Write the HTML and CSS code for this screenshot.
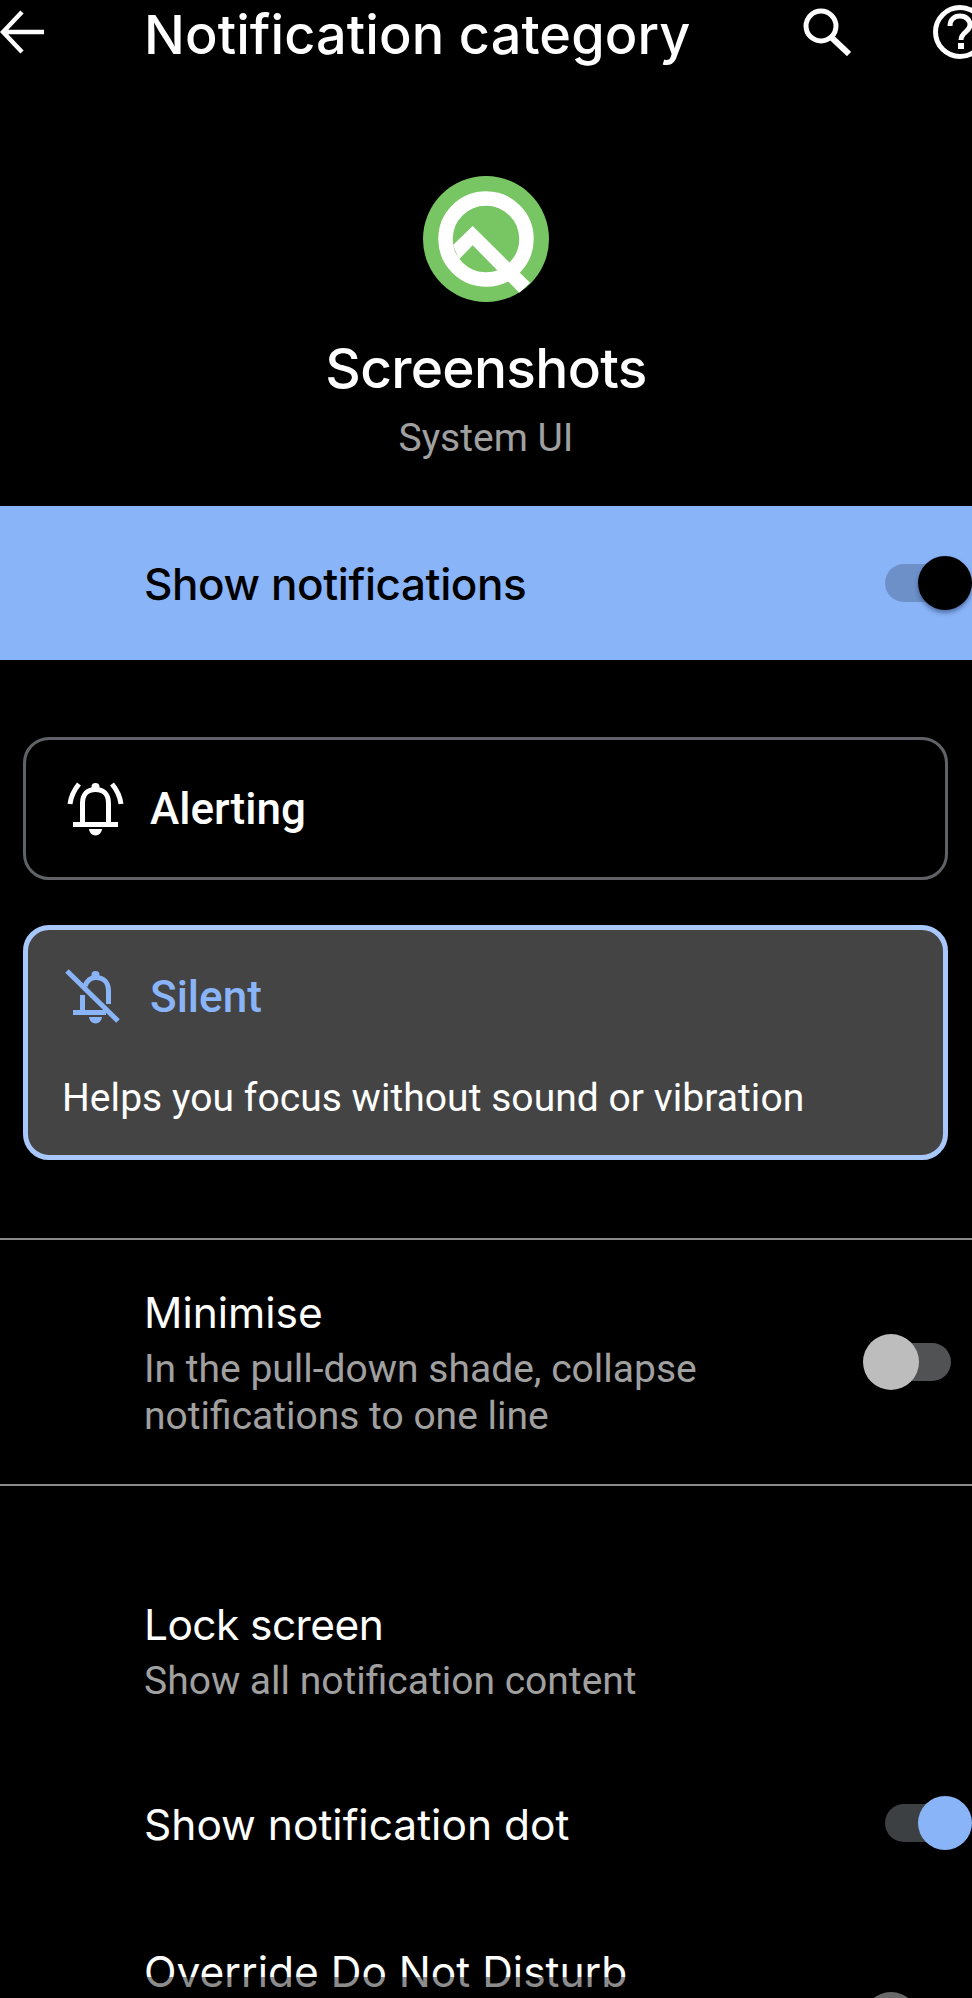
FILE: index.html
```html
<!DOCTYPE html>
<html>
<head>
    <title>Notification category</title>
    <meta charset="UTF-8">
    <link rel="stylesheet" href="styles.css">
</head>
<body>
<div class="screen">
    <header class="app-bar">
        <svg class="back-icon" viewBox="0 0 46 44"><path d="M44 22H4M22 2 3 22l19 20" fill="none" stroke="#fff" stroke-width="4.5"/></svg>
        <h1 class="app-title">Notification category</h1>
        <svg class="search-icon" viewBox="0 0 48 48"><circle cx="18" cy="18" r="15" fill="none" stroke="#fff" stroke-width="5"/><path d="M28 29l18 17" fill="none" stroke="#fff" stroke-width="6"/></svg>
        <svg class="help-icon" viewBox="0 0 54 54"><circle cx="27" cy="27" r="24.5" fill="none" stroke="#fff" stroke-width="5"/><path d="M17 21c0-6 4-10 10-10s10 4 10 9c0 7-9 7-9 15" fill="none" stroke="#fff" stroke-width="5"/><rect x="25" y="38" width="6" height="6" fill="#fff"/></svg>
    </header>

    <section class="hero">
        <svg class="app-logo" viewBox="0 0 126 126">
            <circle cx="63" cy="63" r="63" fill="#78c563"/>
            <circle cx="63" cy="63" r="40.5" fill="none" stroke="#fff" stroke-width="14.5"/>
            <path d="M49.7 50 30 69l6 14.3 13.7-14L96.3 116.7 107 106.7z" fill="#fff"/>
        </svg>
        <div class="hero-title">Screenshots</div>
        <div class="hero-sub">System UI</div>
    </section>

    <div class="master-row">
        <span class="master-label">Show notifications</span>
        <div class="toggle toggle-master"><span class="thumb"></span></div>
    </div>

    <section class="choices">
        <div class="choice">
            <div class="choice-head">
                <svg class="choice-icon" viewBox="0 0 63 63" fill="none" stroke="#fff">
                    <path d="M18.5 46V26c0-9 5.500-13.500 13-13.500S44.500 17 44.500 26v20" stroke-width="5"/>
                    <circle cx="31.500" cy="10" r="4" fill="#fff" stroke="none"/>
                    <path d="M9 47.500h45" stroke-width="5"/>
                    <path d="M25 52h13a6.500 6.500 0 0 1-13 0z" fill="#fff" stroke="none"/>
                    <path d="M6 27C7 19 10 13 15 7M57 27C56 19 53 13 48 7" stroke-width="5"/>
                </svg>
                <span class="choice-name">Alerting</span>
            </div>
        </div>
        <div class="choice choice-on">
            <div class="choice-head">
                <svg class="choice-icon" viewBox="0 0 63 63" fill="none" stroke="#8ab4f8">
                    <path d="M21 21c2-5 6-8.500 10.500-8.500 7.500 0 13 4.500 13 13.500v13" stroke-width="5"/>
                    <path d="M18.500 46V30" stroke-width="5"/>
                    <circle cx="31.500" cy="10" r="4" fill="#8ab4f8" stroke="none"/>
                    <path d="M9 47.500h33" stroke-width="5"/>
                    <path d="M25 52h13a6.500 6.500 0 0 1-13 0z" fill="#8ab4f8" stroke="none"/>
                    <path d="M3 6l51 50" stroke-width="5"/>
                </svg>
                <span class="choice-name">Silent</span>
            </div>
            <p class="choice-text">Helps you focus without sound or vibration</p>
        </div>
    </section>

    <div class="row row-divided">
        <div class="row-text">
            <div class="row-title">Minimise</div>
            <div class="row-sub">In the pull-down shade, collapse<br>notifications to one line</div>
        </div>
        <div class="toggle toggle-off"><span class="thumb"></span></div>
    </div>

    <div class="row row-lock">
        <div class="row-text">
            <div class="row-title row-title-tight">Lock screen</div>
            <div class="row-sub">Show all notification content</div>
        </div>
    </div>

    <div class="row row-dot">
        <div class="row-text">
            <div class="row-title">Show notification dot</div>
        </div>
        <div class="toggle toggle-on"><span class="thumb"></span></div>
    </div>

    <div class="row row-dnd">
        <div class="row-text">
            <div class="row-title">Override Do Not Disturb</div>
        </div>
        <div class="toggle toggle-off"><span class="thumb"></span></div>
    </div>

    <div class="nav-scrim"></div>
</div>
</body>
</html>
```

FILE: styles.css
```css
html, body {
    margin: 0;
    padding: 0;
    background: #000;
}

.screen {
    position: relative;
    width: 972px;
    height: 1998px;
    overflow: hidden;
    background: #000;
    color: #fff;
    font-family: 'Roboto', sans-serif;
}

.app-bar {
    display: flex;
    align-items: center;
    height: 64px;
}

.back-icon {
    width: 46px;
    height: 44px;
    flex: none;
}

.app-title {
    margin: 6px 0 0 98px;
    font-family: 'Inter', sans-serif;
    font-size: 54px;
    font-weight: 500;
    letter-spacing: 0.1px;
    line-height: 64px;
    white-space: nowrap;
}

.search-icon {
    width: 48px;
    height: 48px;
    flex: none;
    margin-left: auto;
}

.help-icon {
    width: 54px;
    height: 54px;
    flex: none;
    margin-left: 82px;
    margin-right: -15px;
}

.hero {
    display: flex;
    flex-direction: column;
    align-items: center;
    box-sizing: border-box;
    height: 442px;
    padding-top: 112px;
}

.app-logo {
    width: 126px;
    height: 126px;
    flex: none;
}

.hero-title {
    margin-top: 28px;
    font-family: 'Inter', sans-serif;
    font-size: 55px;
    font-weight: 500;
    letter-spacing: -0.7px;
    line-height: 76px;
}

.hero-sub {
    margin-top: 8px;
    font-size: 39px;
    line-height: 48px;
    color: #a0a0a0;
}

.master-row {
    display: flex;
    align-items: center;
    justify-content: space-between;
    height: 154px;
    padding-left: 144px;
    padding-right: 21px;
    background: #8ab4f8;
    color: #000;
}

.master-label {
    padding-top: 2px;
    font-family: 'Inter', sans-serif;
    font-size: 44px;
    font-weight: 500;
    letter-spacing: -0.4px;
}

.toggle {
    position: relative;
    flex: none;
    width: 66px;
    height: 38px;
    border-radius: 19px;
}

.thumb {
    position: absolute;
    top: -8px;
    width: 54px;
    height: 54px;
    border-radius: 50%;
}

.toggle-master {
    background: #6d90c9;
}

.toggle-master .thumb {
    right: -21px;
    background: #000;
    box-shadow: 0 3px 4px rgba(30, 50, 90, 0.5);
}

.toggle-on {
    background: #3c4043;
}

.toggle-on .thumb {
    right: -21px;
    background: #8ab4f8;
}

.toggle-off {
    background: #505254;
}

.toggle-off .thumb {
    left: -22px;
    top: -9px;
    width: 56px;
    height: 56px;
    background: #bdbdbd;
}

.choices {
    display: flex;
    flex-direction: column;
    gap: 45px;
    padding: 77px 24px 78px 23px;
}

.choice {
    box-sizing: border-box;
    height: 143px;
    padding: 37px 0 0 38px;
    border: 3px solid #5f6368;
    border-radius: 26px;
}

.choice-on {
    height: 235px;
    padding: 35px 0 0 36px;
    border: 5px solid #a8c7fa;
    background: #444;
}

.choice-head {
    display: flex;
    align-items: center;
    gap: 23px;
}

.choice-icon {
    width: 63px;
    height: 63px;
    flex: none;
}

.choice-name {
    font-size: 44px;
    font-weight: 500;
}

.choice-on .choice-name {
    color: #8ab4f8;
}

.choice-text {
    margin: 46px 0 0 -2px;
    font-size: 39px;
    letter-spacing: 0.05px;
    line-height: 48px;
}

.row {
    display: flex;
    align-items: center;
    justify-content: space-between;
    box-sizing: border-box;
    padding-left: 144px;
    padding-right: 21px;
}

.row-divided {
    height: 248px;
    border-top: 2px solid #8a8a8a;
    border-bottom: 2px solid #8a8a8a;
}

.row-divided .row-text {
    padding-top: 4px;
}

.row-lock {
    margin-top: 114px;
}

.row-dot {
    height: 96px;
    margin-top: 70px;
}

.row-dot .row-text {
    padding-top: 4px;
}

.row-dnd {
    margin-top: 76px;
    align-items: flex-start;
}

.row-dnd .toggle {
    margin-top: 54px;
}

.row-title {
    font-family: 'Inter', sans-serif;
    font-size: 42.5px;
    line-height: 50px;
}

.row-title-tight {
    letter-spacing: -0.6px;
}

.row-sub {
    margin-top: 8px;
    font-size: 39px;
    line-height: 47px;
    color: #a0a0a0;
}

.nav-scrim {
    position: absolute;
    left: 0;
    right: 0;
    top: 1977px;
    bottom: 0;
    background: rgba(0, 0, 0, 0.45);
}
```
